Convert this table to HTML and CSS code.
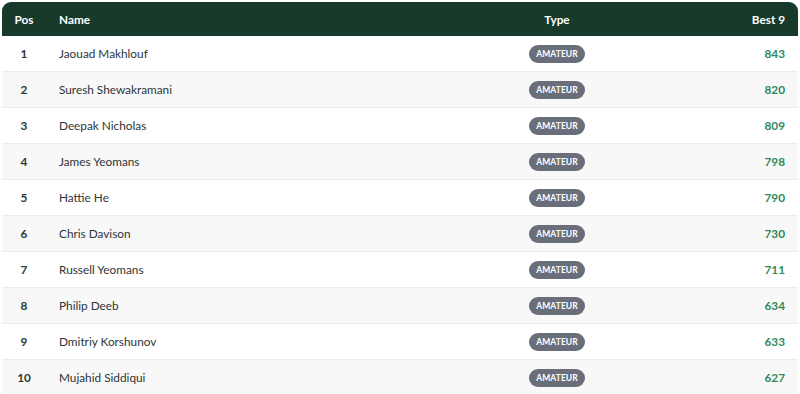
FILE: index.html
```html
<!DOCTYPE html>
<html>
<head>
<meta charset="utf-8">
<link rel="stylesheet" href="styles.css">
</head>
<body>
<div class="board">
  <div class="row head">
    <div class="pos">Pos</div>
    <div class="name">Name</div>
    <div class="type">Type</div>
    <div class="score">Best 9</div>
  </div>
  <div class="row"><div class="pos">1</div><div class="name">Jaouad Makhlouf</div><div class="type"><span class="badge">AMATEUR</span></div><div class="score">843</div></div>
  <div class="row alt"><div class="pos">2</div><div class="name">Suresh Shewakramani</div><div class="type"><span class="badge">AMATEUR</span></div><div class="score">820</div></div>
  <div class="row"><div class="pos">3</div><div class="name">Deepak Nicholas</div><div class="type"><span class="badge">AMATEUR</span></div><div class="score">809</div></div>
  <div class="row alt"><div class="pos">4</div><div class="name">James Yeomans</div><div class="type"><span class="badge">AMATEUR</span></div><div class="score">798</div></div>
  <div class="row"><div class="pos">5</div><div class="name">Hattie He</div><div class="type"><span class="badge">AMATEUR</span></div><div class="score">790</div></div>
  <div class="row alt"><div class="pos">6</div><div class="name">Chris Davison</div><div class="type"><span class="badge">AMATEUR</span></div><div class="score">730</div></div>
  <div class="row"><div class="pos">7</div><div class="name">Russell Yeomans</div><div class="type"><span class="badge">AMATEUR</span></div><div class="score">711</div></div>
  <div class="row alt"><div class="pos">8</div><div class="name">Philip Deeb</div><div class="type"><span class="badge">AMATEUR</span></div><div class="score">634</div></div>
  <div class="row"><div class="pos">9</div><div class="name">Dmitriy Korshunov</div><div class="type"><span class="badge">AMATEUR</span></div><div class="score">633</div></div>
  <div class="row alt"><div class="pos">10</div><div class="name">Mujahid Siddiqui</div><div class="type"><span class="badge">AMATEUR</span></div><div class="score">627</div></div>
</div>
</body>
</html>
```
FILE: styles.css
```css
html, body {
  margin: 0;
  padding: 0;
  background: #ffffff;
}
body {
  padding: 2px 2px 0 2px;
  font-family: "Lato", "Open Sans", sans-serif;
  color: #2a2f33;
  overflow: hidden;
}
.board {
  width: 796px;
}
.row {
  display: grid;
  grid-template-columns: 44px 461px 100px 1fr;
  align-items: center;
  height: 35px;
  border-bottom: 1px solid #ececec;
  font-size: 11.8px;
  background: #ffffff;
}
.row.alt {
  background: #f8f8f8;
}
.row.head {
  background: #183a2b;
  color: #ffffff;
  font-weight: 700;
  font-size: 11.8px;
  height: 34px;
  border-radius: 9px 9px 0 0;
  border-bottom: none;
}
.pos {
  text-align: center;
  font-weight: 700;
  color: #2a3a34;
}
.head .pos { color: #ffffff; }
.name {
  padding-left: 13px;
  color: #2f3438;
}
.head .name { color: #ffffff; }
.type {
  text-align: center;
}
.score {
  text-align: right;
  padding-right: 13px;
  font-weight: 700;
  color: #2f8a5c;
}
.head .score { color: #ffffff; }
.badge {
  display: inline-block;
  vertical-align: middle;
  background: #6a6e7b;
  color: #ffffff;
  font-size: 8.5px;
  font-weight: 700;
  letter-spacing: 0.1px;
  line-height: 18px;
  padding: 0 7px;
  border-radius: 9px;
}
```
